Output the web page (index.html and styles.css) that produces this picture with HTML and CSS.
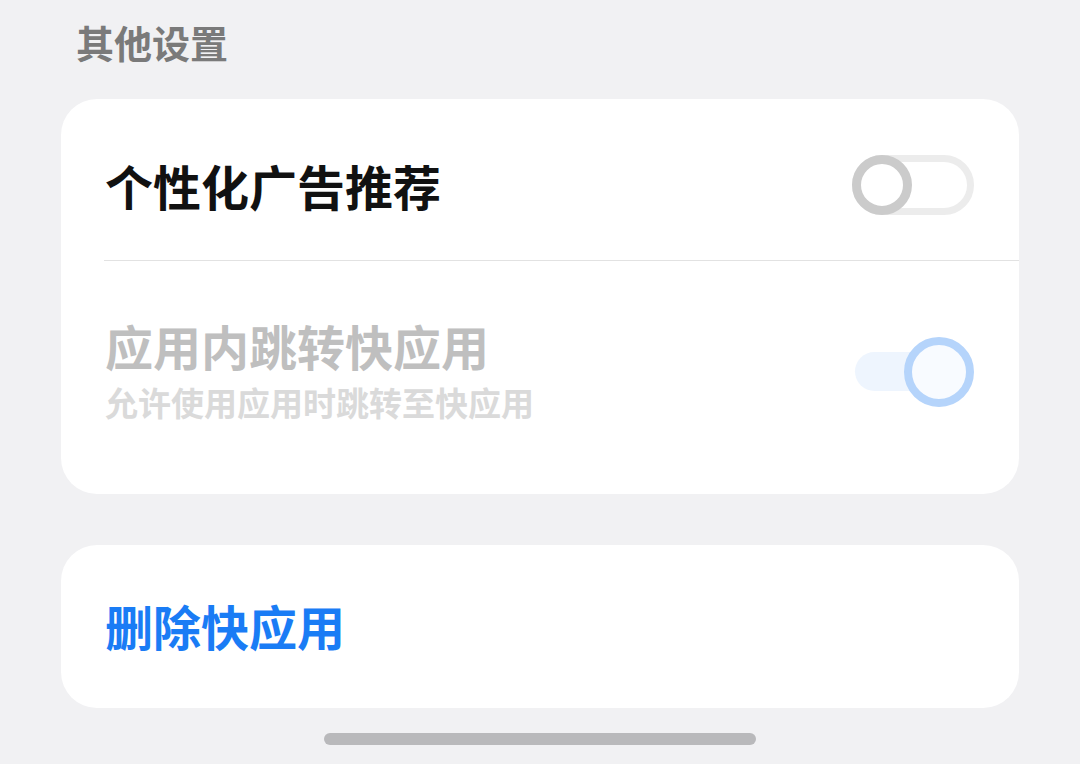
FILE: index.html
```html
<!DOCTYPE html>
<html lang="zh-CN">
<head>
  <meta charset="UTF-8">
  <title>其他设置</title>
  <link rel="stylesheet" href="styles.css">
</head>
<body>
  <div class="page">
    <h2 class="section-title">其他设置</h2>

    <div class="card">
      <div class="row row-main">
        <span class="row-title">个性化广告推荐</span>
        <div class="switch switch-off">
          <span class="knob"></span>
        </div>
      </div>
      <div class="divider"></div>
      <div class="row row-sub disabled">
        <div class="texts">
          <span class="row-title">应用内跳转快应用</span>
          <span class="row-desc">允许使用应用时跳转至快应用</span>
        </div>
        <div class="switch switch-on">
          <span class="track"></span>
          <span class="knob"></span>
        </div>
      </div>
    </div>

    <div class="card card-last">
      <div class="row row-action">
        <span class="row-title action">删除快应用</span>
      </div>
    </div>

    <div class="home-bar"></div>
  </div>
</body>
</html>
```

FILE: styles.css
```css
body {
  margin: 0;
  background: #f1f1f3;
  font-family: "Noto Sans CJK SC", "Noto Sans", sans-serif;
  width: 1080px;
  height: 764px;
  overflow: hidden;
}
.page {
  padding: 0 61px;
}
.section-title {
  margin: 0;
  font-size: 38px;
  line-height: 46px;
  font-weight: 700;
  color: #7a7a7a;
  padding: 19px 15px 34px;
}
.card {
  background: #fff;
  border-radius: 36px;
  margin-bottom: 51px;
}
.card-last {
  margin-bottom: 25px;
}
.row {
  display: flex;
  align-items: center;
  justify-content: space-between;
  padding: 0 45px 0 44px;
}
.row-main {
  height: 150px;
  padding-top: 11px;
}
.row-sub {
  padding-top: 55px;
  padding-bottom: 72px;
}
.row-action {
  padding-top: 51px;
  padding-bottom: 54px;
}
.row-title {
  font-size: 48px;
  line-height: 58px;
  font-weight: 700;
  color: #111;
}
.texts {
  display: flex;
  flex-direction: column;
  gap: 8px;
}
.row-desc {
  font-size: 33px;
  line-height: 40px;
  font-weight: 700;
  color: #dadada;
}
.disabled .row-title {
  color: #bfbfbf;
}
.action {
  color: #1a7cf5;
}
.divider {
  height: 1px;
  background: #e2e2e2;
  margin-left: 43px;
}

/* interrupteurs */
.switch {
  position: relative;
  flex-shrink: 0;
}
.switch-off {
  width: 122px;
  height: 60px;
  box-sizing: border-box;
  border: 7px solid #ececec;
  border-radius: 30px;
  background: #fff;
}
.switch-off .knob {
  position: absolute;
  left: -7px;
  top: -7px;
  width: 60px;
  height: 60px;
  box-sizing: border-box;
  border: 9px solid #cbcbcb;
  border-radius: 50%;
  background: #fff;
}
.switch-on {
  width: 119px;
  height: 70px;
  margin-top: 6px;
}
.switch-on .track {
  position: absolute;
  left: 0;
  top: 15px;
  width: 100px;
  height: 39px;
  border-radius: 20px;
  background: #eef5fe;
}
.switch-on .knob {
  position: absolute;
  right: 0;
  top: 0;
  width: 70px;
  height: 70px;
  box-sizing: border-box;
  border: 8px solid #b5d4fb;
  border-radius: 50%;
  background: #f8fbff;
}
.home-bar {
  width: 432px;
  height: 12px;
  border-radius: 6px;
  background: #b9b9bb;
  margin: 0 auto;
}
```
